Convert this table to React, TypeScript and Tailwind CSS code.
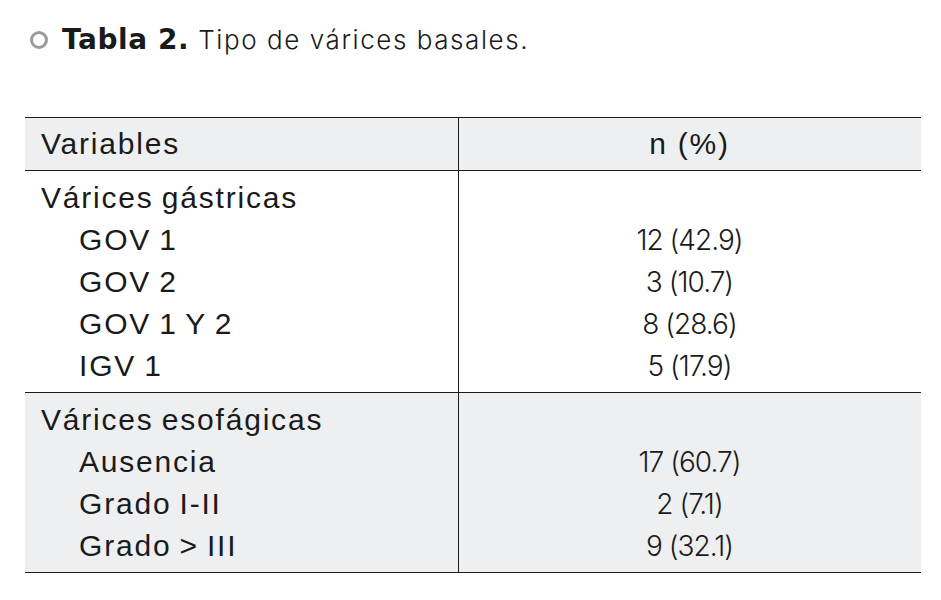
const gastricas = [
  { label: "GOV 1", value: "12 (42.9)" },
  { label: "GOV 2", value: "3 (10.7)" },
  { label: "GOV 1 Y 2", value: "8 (28.6)" },
  { label: "IGV 1", value: "5 (17.9)" },
];

const esofagicas = [
  { label: "Ausencia", value: "17 (60.7)" },
  { label: "Grado I-II", value: "2 (7.1)" },
  { label: "Grado > III", value: "9 (32.1)" },
];

function Row({ label, value, indent }: { label: string; value?: string; indent?: boolean }) {
  return (
    <div className="flex h-[42px] items-center">
      <div className={`w-[433px] shrink-0 [word-spacing:-2px] ${indent ? "pl-[54px]" : "pl-[16px]"}`}>{label}</div>
      <div className="flex-1 text-center font-['Inter',sans-serif] text-[28px] font-light tracking-[-0.035em]">{value}</div>
    </div>
  );
}

function Group({ title, rows, shaded }: { title: string; rows: { label: string; value: string }[]; shaded?: boolean }) {
  return (
    <div className={`relative border-b border-[#1a1a1a] pt-[6px] pb-[5px] ${shaded ? "bg-[#eeeff1]" : "bg-white"}`}>
      <div className="absolute top-0 bottom-0 left-[433px] w-px bg-[#1a1a1a]" />
      <Row label={title} />
      {rows.map((r) => (
        <Row key={r.label} label={r.label} value={r.value} indent />
      ))}
    </div>
  );
}

export default function App() {
  return (
    <div className="h-[600px] w-[941px] bg-white font-['Liberation_Sans',sans-serif] text-[#1a1a1a]">
      <div className="flex items-center gap-[14px] pl-[30px] pt-[24px]">
        <span className="h-[18px] w-[18px] rounded-full border-[3px] border-[#9a9a9a]" />
        <h1 className="flex items-baseline gap-[9px] leading-[32px]">
          <span className="font-['DejaVu_Sans',sans-serif] text-[28px] font-bold tracking-[0.02em]">Tabla 2.</span>
          <span className="font-['Inter',sans-serif] text-[26px] font-light tracking-[0.06em]">Tipo de várices basales.</span>
        </h1>
      </div>

      <div className="ml-[25px] mt-[61px] w-[896px] text-[30px] leading-none tracking-[0.06em]">
        <div className="relative flex h-[54px] items-center border-y border-[#1a1a1a] bg-[#eeeff1]">
          <div className="w-[433px] shrink-0 pl-[16px]">Variables</div>
          <div className="absolute top-0 bottom-0 left-[433px] w-px bg-[#1a1a1a]" />
          <div className="flex-1 text-center">n (%)</div>
        </div>
        <Group title="Várices gástricas" rows={gastricas} />
        <Group title="Várices esofágicas" rows={esofagicas} shaded />
      </div>
    </div>
  );
}
